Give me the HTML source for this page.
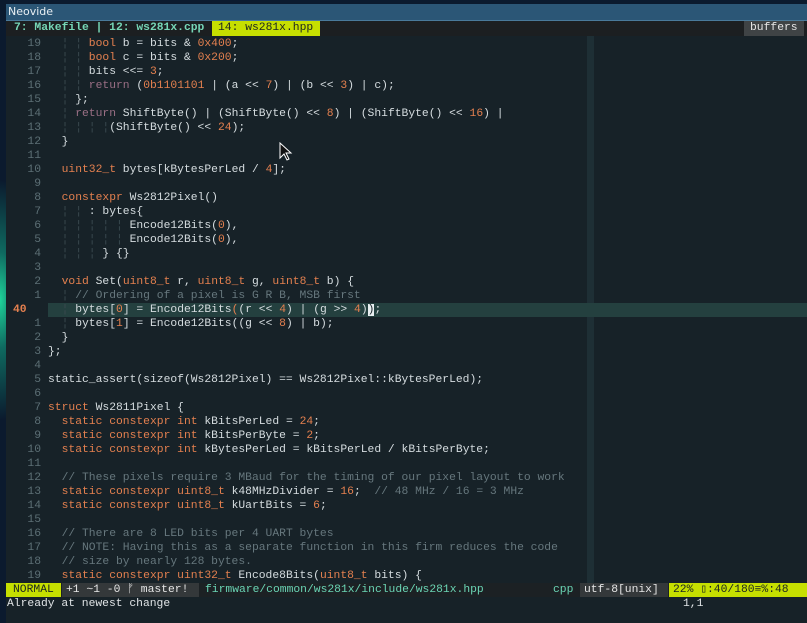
<!DOCTYPE html>
<html><head><meta charset="utf-8"><style>
html,body{margin:0;padding:0;width:807px;height:623px;overflow:hidden;background:#0b1a2e;}
body{position:relative;font-family:"Liberation Mono",monospace;font-size:11.33px;}
#desk{position:absolute;left:0;top:0;width:807px;height:623px;background:radial-gradient(ellipse 40px 120px at 0px 300px,#1fd49a 0%,#0f6a60 40%,#0b1a2e 100%),#0b1a2e;}
#win{position:absolute;left:6px;top:4px;width:801px;height:619px;background:#172228;}
#title{position:absolute;left:6px;top:4px;width:801px;height:17px;background:#2b5676;border-bottom:1px solid #4a7a9a;box-sizing:border-box;color:#e8eef2;font-family:"DejaVu Sans","Liberation Sans",sans-serif;font-size:11px;line-height:16px;padding-left:2px;}
#tabs{position:absolute;left:6px;top:21px;width:801px;height:15px;background:#1c1f21;}
.t{position:absolute;top:21px;height:15px;line-height:15px;white-space:pre;}
#cc{position:absolute;left:587px;top:36px;width:7px;height:547px;background:#1e2f35;}
#cl{position:absolute;left:48px;top:303px;width:759px;height:14px;background:#24403f;}
.l{position:absolute;left:0;height:14px;line-height:14px;white-space:pre;color:#d6dde0;}
.ln{position:absolute;left:6px;width:35px;text-align:right;color:#5c6f75;}
.code{position:absolute;left:48px;}
.k{color:#e4804f}.n{color:#e4804f}.c{color:#66777d}.r{color:#9a6f85}.g{color:#3a4a50}
.sb{position:absolute;top:583px;height:14px;line-height:14px;white-space:pre;}
</style></head><body>
<div id="desk"></div>
<div id="win"></div>
<div id="title">Neovide</div>
<div id="tabs"></div>
<div class="t" style="left:14px;color:#76d6b6;font-weight:bold">7: Makefile | 12: ws281x.cpp</div>
<div class="t" style="left:212px;width:108px;background:#c6df00;color:#1c2420;padding-left:6px;box-sizing:border-box">14: ws281x.hpp</div>
<div class="t" style="left:744px;width:60px;background:#3f4345;color:#e6e6e6;padding-left:6px;box-sizing:border-box">buffers</div>
<div id="cc"></div>
<div id="cl"></div>

<div class="l" style="top:37px"><span class="ln">19</span><span class="code"><span class="g">  ¦ ¦ </span><span class="k">bool</span> b = bits &amp; <span class="n">0x400</span>;</span></div>
<div class="l" style="top:51px"><span class="ln">18</span><span class="code"><span class="g">  ¦ ¦ </span><span class="k">bool</span> c = bits &amp; <span class="n">0x200</span>;</span></div>
<div class="l" style="top:65px"><span class="ln">17</span><span class="code"><span class="g">  ¦ ¦ </span>bits &lt;&lt;= <span class="n">3</span>;</span></div>
<div class="l" style="top:79px"><span class="ln">16</span><span class="code"><span class="g">  ¦ ¦ </span><span class="r">return</span> (<span class="n">0b1101101</span> | (a &lt;&lt; <span class="n">7</span>) | (b &lt;&lt; <span class="n">3</span>) | c);</span></div>
<div class="l" style="top:93px"><span class="ln">15</span><span class="code"><span class="g">  ¦ </span>};</span></div>
<div class="l" style="top:107px"><span class="ln">14</span><span class="code"><span class="g">  ¦ </span><span class="r">return</span> ShiftByte() | (ShiftByte() &lt;&lt; <span class="n">8</span>) | (ShiftByte() &lt;&lt; <span class="n">16</span>) |</span></div>
<div class="l" style="top:121px"><span class="ln">13</span><span class="code"><span class="g">  ¦ ¦ ¦ ¦</span>(ShiftByte() &lt;&lt; <span class="n">24</span>);</span></div>
<div class="l" style="top:135px"><span class="ln">12</span><span class="code">  }</span></div>
<div class="l" style="top:149px"><span class="ln">11</span></div>
<div class="l" style="top:163px"><span class="ln">10</span><span class="code">  <span class="k">uint32_t</span> bytes[kBytesPerLed / <span class="n">4</span>];</span></div>
<div class="l" style="top:177px"><span class="ln">9</span></div>
<div class="l" style="top:191px"><span class="ln">8</span><span class="code">  <span class="k">constexpr</span> Ws2812Pixel()</span></div>
<div class="l" style="top:205px"><span class="ln">7</span><span class="code"><span class="g">  ¦ ¦ </span>: bytes{</span></div>
<div class="l" style="top:219px"><span class="ln">6</span><span class="code"><span class="g">  ¦ ¦ ¦ ¦ ¦ </span>Encode12Bits(<span class="n">0</span>),</span></div>
<div class="l" style="top:233px"><span class="ln">5</span><span class="code"><span class="g">  ¦ ¦ ¦ ¦ ¦ </span>Encode12Bits(<span class="n">0</span>),</span></div>
<div class="l" style="top:247px"><span class="ln">4</span><span class="code"><span class="g">  ¦ ¦ ¦ </span>} {}</span></div>
<div class="l" style="top:261px"><span class="ln">3</span></div>
<div class="l" style="top:275px"><span class="ln">2</span><span class="code">  <span class="k">void</span> Set(<span class="k">uint8_t</span> r, <span class="k">uint8_t</span> g, <span class="k">uint8_t</span> b) {</span></div>
<div class="l" style="top:289px"><span class="ln">1</span><span class="code"><span class="g">  ¦ </span><span class="c">// Ordering of a pixel is G R B, MSB first</span></span></div>
<div class="l" style="top:303px"><span class="ln" style="left:13px;width:auto;text-align:left;color:#e4804f;font-weight:bold">40</span><span class="code"><span class="g">  ¦ </span>bytes[<span class="n">0</span>] = Encode12Bits<span class="n">(</span>(r &lt;&lt; <span class="n">4</span>) | (g &gt;&gt; <span class="n">4</span>)<span style="background:#e8eef0;color:#172228">)</span>;</span></div>
<div class="l" style="top:317px"><span class="ln">1</span><span class="code"><span class="g">  ¦ </span>bytes[<span class="n">1</span>] = Encode12Bits((g &lt;&lt; <span class="n">8</span>) | b);</span></div>
<div class="l" style="top:331px"><span class="ln">2</span><span class="code">  }</span></div>
<div class="l" style="top:345px"><span class="ln">3</span><span class="code">};</span></div>
<div class="l" style="top:359px"><span class="ln">4</span></div>
<div class="l" style="top:373px"><span class="ln">5</span><span class="code">static_assert(sizeof(Ws2812Pixel) == Ws2812Pixel::kBytesPerLed);</span></div>
<div class="l" style="top:387px"><span class="ln">6</span></div>
<div class="l" style="top:401px"><span class="ln">7</span><span class="code"><span class="k">struct</span> Ws2811Pixel {</span></div>
<div class="l" style="top:415px"><span class="ln">8</span><span class="code">  <span class="k">static constexpr int</span> kBitsPerLed = <span class="n">24</span>;</span></div>
<div class="l" style="top:429px"><span class="ln">9</span><span class="code">  <span class="k">static constexpr int</span> kBitsPerByte = <span class="n">2</span>;</span></div>
<div class="l" style="top:443px"><span class="ln">10</span><span class="code">  <span class="k">static constexpr int</span> kBytesPerLed = kBitsPerLed / kBitsPerByte;</span></div>
<div class="l" style="top:457px"><span class="ln">11</span></div>
<div class="l" style="top:471px"><span class="ln">12</span><span class="code">  <span class="c">// These pixels require 3 MBaud for the timing of our pixel layout to work</span></span></div>
<div class="l" style="top:485px"><span class="ln">13</span><span class="code">  <span class="k">static constexpr uint8_t</span> k48MHzDivider = <span class="n">16</span>;  <span class="c">// 48 MHz / 16 = 3 MHz</span></span></div>
<div class="l" style="top:499px"><span class="ln">14</span><span class="code">  <span class="k">static constexpr uint8_t</span> kUartBits = <span class="n">6</span>;</span></div>
<div class="l" style="top:513px"><span class="ln">15</span></div>
<div class="l" style="top:527px"><span class="ln">16</span><span class="code">  <span class="c">// There are 8 LED bits per 4 UART bytes</span></span></div>
<div class="l" style="top:541px"><span class="ln">17</span><span class="code">  <span class="c">// NOTE: Having this as a separate function in this firm reduces the code</span></span></div>
<div class="l" style="top:555px"><span class="ln">18</span><span class="code">  <span class="c">// size by nearly 128 bytes.</span></span></div>
<div class="l" style="top:569px"><span class="ln">19</span><span class="code">  <span class="k">static constexpr uint32_t</span> Encode8Bits(<span class="k">uint8_t</span> bits) {</span></div>

<div class="sb" style="left:6px;width:801px;background:#1c2124"></div>
<div class="sb" style="left:6px;width:55px;background:#c6df00;color:#1c2420;padding-left:7px;box-sizing:border-box">NORMAL</div>
<div class="sb" style="left:62px;width:137px;background:#34383a;color:#e6e6e6;padding-left:4px;box-sizing:border-box">+1 ~1 -0 ᚠ master!</div>
<div class="sb" style="left:205px;color:#6ad4b4">firmware/common/ws281x/include/ws281x.hpp</div>
<div class="sb" style="left:553px;color:#6ad4b4">cpp</div>
<div class="sb" style="left:580px;width:88px;background:#34383a;color:#e6e6e6;padding-left:4px;box-sizing:border-box">utf-8[unix]</div>
<div class="sb" style="left:669px;width:138px;background:#c6df00;color:#1c2420;padding-left:4px;box-sizing:border-box">22% ▯:40/180≡%:48</div>
<div class="l" style="top:597px;left:7px;color:#e0e4e6">Already at newest change</div>
<div class="l" style="top:597px;left:683px;color:#e0e4e6">1,1</div>

<svg style="position:absolute;left:279px;top:142px" width="14" height="20" viewBox="0 0 14 20"><path d="M1 1 L1 16 L5 12 L8 18 L10 17 L7 11 L12 11 Z" fill="#111" stroke="#fff" stroke-width="1"/></svg>
</body></html>
